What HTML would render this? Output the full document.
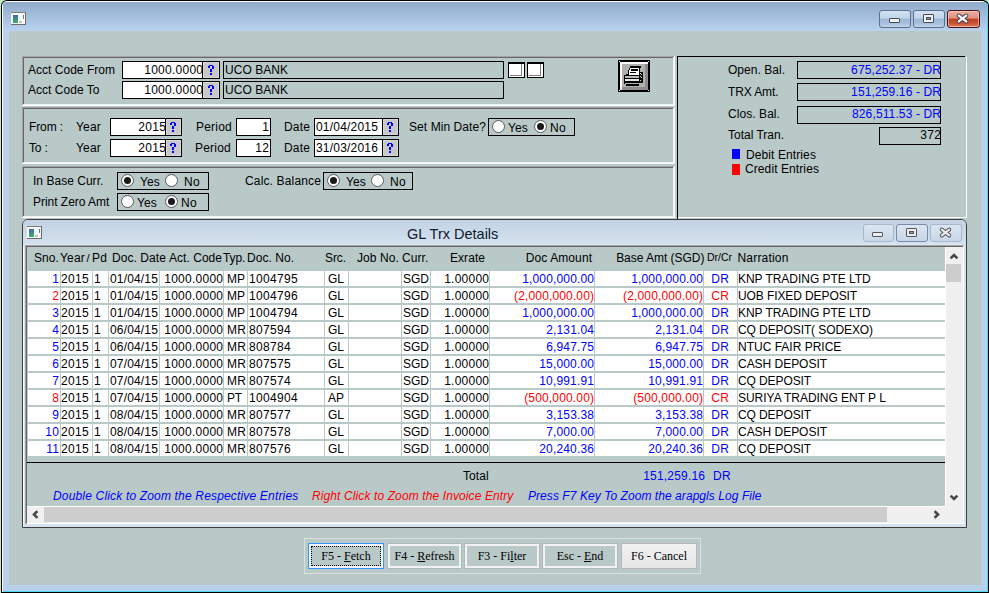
<!DOCTYPE html>
<html><head><meta charset="utf-8"><style>
html,body{margin:0;padding:0;width:989px;height:593px;overflow:hidden;background:#c6e8c6}
.a{position:absolute}
.t{position:absolute;font-family:"Liberation Sans",sans-serif;font-size:12px;line-height:15px;white-space:nowrap;color:#000}
.s{font-family:"Liberation Serif",serif;font-size:12px}
.q{color:#0000ff;font-weight:bold;text-align:center;font-size:13px;line-height:16px}
</style></head><body>
<div class="a" style="left:0;top:0;width:989px;height:593px;background:#c6e8c6"></div>
<div class="a" style="left:1px;top:0;width:988px;height:593px;background:#000;border-radius:6px 6px 0 0"></div>
<div class="a" style="left:2px;top:1px;width:985px;height:591px;background:#fff;border-radius:5px 5px 0 0"></div>
<div class="a" style="left:3px;top:2px;width:985px;height:590px;background:#4cd8f8;border-radius:4px 4px 0 0"></div>
<div class="a" style="left:3px;top:2px;width:984px;height:589px;background:linear-gradient(#8faacb 0px,#b9d2ee 29px,#b8d0ea 30px);border-radius:4px 4px 0 0"></div>
<div class="a" style="left:9px;top:31px;width:972px;height:554px;background:#b8c9c8"></div>
<svg class="a" style="left:11px;top:12px" width="15" height="13" viewBox="0 0 15 13" shape-rendering="crispEdges">
<defs><linearGradient id="ig11" x1="0" y1="0" x2="0" y2="1"><stop offset="0" stop-color="#3a66b8"/><stop offset="1" stop-color="#3cb858"/></linearGradient></defs>
<rect x="0" y="0" width="15" height="13" fill="#fafafa"/>
<rect x="0" y="0" width="15" height="1" fill="#7c7c7c"/><rect x="14" y="0" width="1" height="13" fill="#6c6c6c"/><rect x="0" y="12" width="15" height="1" fill="#6c6c6c"/>
<rect x="2" y="3" width="5" height="8" fill="url(#ig11)"/>
<rect x="8" y="9" width="3" height="2" fill="#c4c4c4"/>
<rect x="12" y="3" width="1" height="4" fill="url(#ig11)"/>
</svg>
<div class="a" style="left:879px;top:10px;width:32px;height:18px;box-sizing:border-box;border:1px solid #5d6f8c;border-radius:3px;background:linear-gradient(#d4e2f2 0,#c0d4ea 45%,#9fb8d6 50%,#a8c0dc 80%,#c2d6ee 100%)"></div>
<div class="a" style="left:889px;top:18px;width:11px;height:5px;box-sizing:border-box;border:1px solid #444c5c;border-radius:1px;background:#f4f4f4"></div>
<div class="a" style="left:913px;top:10px;width:32px;height:18px;box-sizing:border-box;border:1px solid #5d6f8c;border-radius:3px;background:linear-gradient(#d4e2f2 0,#c0d4ea 45%,#9fb8d6 50%,#a8c0dc 80%,#c2d6ee 100%)"></div>
<div class="a" style="left:923px;top:14px;width:11px;height:9px;box-sizing:border-box;border:1px solid #444c5c;border-radius:1px;background:#f4f4f4"></div>
<div class="a" style="left:926px;top:17px;width:5px;height:3px;box-sizing:border-box;border:1px solid #444c5c;background:#8aa0c0"></div>
<div class="a" style="left:947px;top:10px;width:33px;height:18px;box-sizing:border-box;border:1px solid #4a1018;border-radius:3px;box-shadow:inset 0 0 0 1px rgba(255,220,210,0.55);background:linear-gradient(#eab0a0 0,#de9080 45%,#c0401f 50%,#c85535 80%,#dd8868 100%)"></div>
<svg class="a" style="left:957px;top:14px;overflow:visible" width="11" height="9" viewBox="0 0 11 9"><path d="M1.8 1.6 L9.2 7.4 M9.2 1.6 L1.8 7.4" stroke="#3a3a4a" stroke-width="4.2" stroke-linecap="round"/><path d="M1.8 1.6 L9.2 7.4 M9.2 1.6 L1.8 7.4" stroke="#f6f6f6" stroke-width="2.4" stroke-linecap="round"/></svg>
<div class="a" style="left:22px;top:56px;width:652px;height:1px;background:#a4a4a4"></div>
<div class="a" style="left:22px;top:56px;width:1px;height:49px;background:#a4a4a4"></div>
<div class="a" style="left:23px;top:57px;width:650px;height:1px;background:#666666"></div>
<div class="a" style="left:23px;top:57px;width:1px;height:47px;background:#666666"></div>
<div class="a" style="left:23px;top:104px;width:651px;height:1px;background:#eef2f2"></div>
<div class="a" style="left:673px;top:57px;width:1px;height:48px;background:#eef2f2"></div>
<div class="a" style="left:22px;top:105px;width:653px;height:1px;background:#ffffff"></div>
<div class="a" style="left:674px;top:56px;width:1px;height:50px;background:#ffffff"></div>
<div class="a" style="left:22px;top:107px;width:652px;height:1px;background:#a4a4a4"></div>
<div class="a" style="left:22px;top:107px;width:1px;height:56px;background:#a4a4a4"></div>
<div class="a" style="left:23px;top:108px;width:650px;height:1px;background:#666666"></div>
<div class="a" style="left:23px;top:108px;width:1px;height:54px;background:#666666"></div>
<div class="a" style="left:23px;top:162px;width:651px;height:1px;background:#eef2f2"></div>
<div class="a" style="left:673px;top:108px;width:1px;height:55px;background:#eef2f2"></div>
<div class="a" style="left:22px;top:163px;width:653px;height:1px;background:#ffffff"></div>
<div class="a" style="left:674px;top:107px;width:1px;height:57px;background:#ffffff"></div>
<div class="a" style="left:22px;top:166px;width:652px;height:1px;background:#a4a4a4"></div>
<div class="a" style="left:22px;top:166px;width:1px;height:51px;background:#a4a4a4"></div>
<div class="a" style="left:23px;top:167px;width:650px;height:1px;background:#666666"></div>
<div class="a" style="left:23px;top:167px;width:1px;height:49px;background:#666666"></div>
<div class="a" style="left:23px;top:216px;width:651px;height:1px;background:#eef2f2"></div>
<div class="a" style="left:673px;top:167px;width:1px;height:50px;background:#eef2f2"></div>
<div class="a" style="left:22px;top:217px;width:653px;height:1px;background:#ffffff"></div>
<div class="a" style="left:674px;top:166px;width:1px;height:52px;background:#ffffff"></div>
<div class="a" style="left:677px;top:56px;width:288px;height:1px;background:#000"></div>
<div class="a" style="left:677px;top:56px;width:1px;height:163px;background:#000"></div>
<div class="a" style="left:966px;top:57px;width:1px;height:161px;background:#fff"></div>
<div class="a" style="left:678px;top:217px;width:289px;height:1px;background:#fff"></div>
<div class="t" style="left:28px;top:63px;letter-spacing:0.022px;">Acct Code From</div>
<div class="t" style="left:28px;top:83px;letter-spacing:0.025px;">Acct Code To</div>
<div class="a" style="left:122px;top:61px;width:98px;height:18px;box-sizing:border-box;border:1px solid #000;background:#fff"></div>
<div class="a" style="left:202px;top:61px;width:1px;height:18px;background:#000"></div>
<div class="a" style="left:203px;top:62px;width:16px;height:16px;background:#c8c8c8;box-shadow:inset 0 0 0 1px #d8d8d8"></div>
<svg class="a" style="left:208px;top:65px" width="6" height="10" viewBox="0 0 6 10" shape-rendering="crispEdges" fill="#0000ff"><rect x="1" y="0" width="4" height="1"/><rect x="0" y="1" width="2" height="2"/><rect x="4" y="1" width="2" height="3"/><rect x="2" y="4" width="2" height="3"/><rect x="2" y="8" width="2" height="2"/></svg>
<div class="a" style="left:122px;top:81px;width:98px;height:18px;box-sizing:border-box;border:1px solid #000;background:#fff"></div>
<div class="a" style="left:202px;top:81px;width:1px;height:18px;background:#000"></div>
<div class="a" style="left:203px;top:82px;width:16px;height:16px;background:#c8c8c8;box-shadow:inset 0 0 0 1px #d8d8d8"></div>
<svg class="a" style="left:208px;top:85px" width="6" height="10" viewBox="0 0 6 10" shape-rendering="crispEdges" fill="#0000ff"><rect x="1" y="0" width="4" height="1"/><rect x="0" y="1" width="2" height="2"/><rect x="4" y="1" width="2" height="3"/><rect x="2" y="4" width="2" height="3"/><rect x="2" y="8" width="2" height="2"/></svg>
<div class="t" style="left:3.253px;width:200px;text-align:right;top:63px;letter-spacing:0.253px;">1000.0000</div>
<div class="t" style="left:3.253px;width:200px;text-align:right;top:83px;letter-spacing:0.253px;">1000.0000</div>
<div class="a" style="left:223px;top:61px;width:281px;height:18px;box-sizing:border-box;border:1px solid #000;background:#b8c9c8"></div>
<div class="a" style="left:223px;top:81px;width:281px;height:18px;box-sizing:border-box;border:1px solid #000;background:#b8c9c8"></div>
<div class="t" style="left:225px;top:63px;letter-spacing:0.04px;">UCO BANK</div>
<div class="t" style="left:225px;top:83px;letter-spacing:0.04px;">UCO BANK</div>
<div class="a" style="left:508px;top:62px;width:17px;height:16px;box-sizing:border-box;border:1px solid #000;border-top-width:2px;background:#fff"></div>
<div class="a" style="left:521px;top:64px;width:1px;height:12px;background:#808080"></div>
<div class="a" style="left:510px;top:75px;width:12px;height:1px;background:#808080"></div>
<div class="a" style="left:527px;top:62px;width:17px;height:16px;box-sizing:border-box;border:1px solid #000;border-top-width:2px;background:#fff"></div>
<div class="a" style="left:540px;top:64px;width:1px;height:12px;background:#808080"></div>
<div class="a" style="left:529px;top:75px;width:12px;height:1px;background:#808080"></div>
<div class="a" style="left:618px;top:60px;width:32px;height:32px;box-sizing:border-box;border:2px solid #000;background:#b0b0b0;box-shadow:inset 2px 2px 0 #f8f8f8,inset -3px -3px 0 #8c8c8c"></div>
<svg class="a" style="left:617px;top:59px" width="34" height="34" viewBox="0 0 34 34" shape-rendering="crispEdges">
<rect x="2" y="2" width="1" height="1" fill="#fff"/><rect x="31" y="2" width="1" height="1" fill="#fff"/><rect x="2" y="31" width="1" height="1" fill="#fff"/><rect x="31" y="31" width="1" height="1" fill="#fff"/>
<rect x="13" y="7" width="11" height="2" fill="#000"/>
<rect x="12" y="9" width="10" height="7" fill="#fff"/>
<rect x="12" y="9" width="1" height="2" fill="#000"/><rect x="11" y="11" width="1" height="4" fill="#000"/>
<rect x="14" y="10" width="7" height="2" fill="#000"/><rect x="13" y="13" width="6" height="1" fill="#000"/>
<rect x="22" y="9" width="1" height="5" fill="#000"/>
<rect x="9" y="15" width="3" height="1" fill="#000"/>
<rect x="7" y="16" width="17" height="1" fill="#000"/>
<rect x="8" y="17" width="15" height="2" fill="#b8b8b8"/>
<rect x="7" y="17" width="1" height="8" fill="#000"/>
<rect x="8" y="19" width="15" height="1" fill="#000"/>
<rect x="8" y="20" width="15" height="2" fill="#e4e4e4"/>
<rect x="8" y="22" width="15" height="2" fill="#000"/>
<rect x="8" y="24" width="15" height="1" fill="#b0b0b0"/>
<rect x="9" y="25" width="13" height="2" fill="#000"/>
<rect x="22" y="13" width="4" height="11" fill="#000"/>
<rect x="23" y="14" width="1" height="1" fill="#ddd"/><rect x="24" y="15" width="1" height="1" fill="#ddd"/><rect x="23" y="17" width="1" height="1" fill="#ddd"/><rect x="24" y="18" width="1" height="1" fill="#ddd"/><rect x="23" y="21" width="1" height="1" fill="#ddd"/>
</svg>
<div class="t" style="left:29px;top:120px;letter-spacing:-0.111px;">From :</div>
<div class="t" style="left:76px;top:120px;letter-spacing:0.163px;">Year</div>
<div class="a" style="left:110px;top:118px;width:72px;height:18px;box-sizing:border-box;border:1px solid #000;background:#fff"></div>
<div class="a" style="left:165px;top:118px;width:1px;height:18px;background:#000"></div>
<div class="a" style="left:166px;top:119px;width:15px;height:16px;background:#c8c8c8;box-shadow:inset 0 0 0 1px #d8d8d8"></div>
<svg class="a" style="left:170px;top:122px" width="6" height="10" viewBox="0 0 6 10" shape-rendering="crispEdges" fill="#0000ff"><rect x="1" y="0" width="4" height="1"/><rect x="0" y="1" width="2" height="2"/><rect x="4" y="1" width="2" height="3"/><rect x="2" y="4" width="2" height="3"/><rect x="2" y="8" width="2" height="2"/></svg>
<div class="t" style="left:-33.674px;width:200px;text-align:right;top:120px;letter-spacing:0.326px;">2015</div>
<div class="t" style="left:196px;top:120px;letter-spacing:0.219px;">Period</div>
<div class="a" style="left:236px;top:118px;width:35px;height:18px;box-sizing:border-box;border:1px solid #000;background:#fff"></div>
<div class="t" style="left:69.326px;width:200px;text-align:right;top:120px;letter-spacing:0.326px;">1</div>
<div class="t" style="left:284px;top:120px;letter-spacing:0.163px;">Date</div>
<div class="a" style="left:314px;top:118px;width:85px;height:18px;box-sizing:border-box;border:1px solid #000;background:#fff"></div>
<div class="a" style="left:382px;top:118px;width:1px;height:18px;background:#000"></div>
<div class="a" style="left:383px;top:119px;width:15px;height:16px;background:#c8c8c8;box-shadow:inset 0 0 0 1px #d8d8d8"></div>
<svg class="a" style="left:387px;top:122px" width="6" height="10" viewBox="0 0 6 10" shape-rendering="crispEdges" fill="#0000ff"><rect x="1" y="0" width="4" height="1"/><rect x="0" y="1" width="2" height="2"/><rect x="4" y="1" width="2" height="3"/><rect x="2" y="4" width="2" height="3"/><rect x="2" y="8" width="2" height="2"/></svg>
<div class="t" style="left:316px;top:120px;letter-spacing:0.194px;">01/04/2015</div>
<div class="t" style="left:29px;top:141px;letter-spacing:-0.168px;">To :</div>
<div class="t" style="left:76px;top:141px;letter-spacing:0.163px;">Year</div>
<div class="a" style="left:110px;top:139px;width:72px;height:18px;box-sizing:border-box;border:1px solid #000;background:#fff"></div>
<div class="a" style="left:165px;top:139px;width:1px;height:18px;background:#000"></div>
<div class="a" style="left:166px;top:140px;width:15px;height:16px;background:#c8c8c8;box-shadow:inset 0 0 0 1px #d8d8d8"></div>
<svg class="a" style="left:170px;top:143px" width="6" height="10" viewBox="0 0 6 10" shape-rendering="crispEdges" fill="#0000ff"><rect x="1" y="0" width="4" height="1"/><rect x="0" y="1" width="2" height="2"/><rect x="4" y="1" width="2" height="3"/><rect x="2" y="4" width="2" height="3"/><rect x="2" y="8" width="2" height="2"/></svg>
<div class="t" style="left:-33.674px;width:200px;text-align:right;top:141px;letter-spacing:0.326px;">2015</div>
<div class="t" style="left:195px;top:141px;letter-spacing:0.219px;">Period</div>
<div class="a" style="left:236px;top:139px;width:35px;height:18px;box-sizing:border-box;border:1px solid #000;background:#fff"></div>
<div class="t" style="left:69.326px;width:200px;text-align:right;top:141px;letter-spacing:0.326px;">12</div>
<div class="t" style="left:284px;top:141px;letter-spacing:0.163px;">Date</div>
<div class="a" style="left:314px;top:139px;width:85px;height:18px;box-sizing:border-box;border:1px solid #000;background:#fff"></div>
<div class="a" style="left:382px;top:139px;width:1px;height:18px;background:#000"></div>
<div class="a" style="left:383px;top:140px;width:15px;height:16px;background:#c8c8c8;box-shadow:inset 0 0 0 1px #d8d8d8"></div>
<svg class="a" style="left:387px;top:143px" width="6" height="10" viewBox="0 0 6 10" shape-rendering="crispEdges" fill="#0000ff"><rect x="1" y="0" width="4" height="1"/><rect x="0" y="1" width="2" height="2"/><rect x="4" y="1" width="2" height="3"/><rect x="2" y="4" width="2" height="3"/><rect x="2" y="8" width="2" height="2"/></svg>
<div class="t" style="left:316px;top:141px;letter-spacing:0.194px;">31/03/2016</div>
<div class="t" style="left:409px;top:120px;letter-spacing:0.074px;">Set Min Date?</div>
<div class="a" style="left:488px;top:118px;width:87px;height:18px;box-sizing:border-box;border:1px solid #000"></div>
<div class="a" style="left:492px;top:120px;width:13px;height:13px;box-sizing:border-box;border:1px solid #5a5a5a;border-radius:50%;background:#fff"></div>
<div class="t" style="left:508px;top:121px;letter-spacing:0.107px;">Yes</div>
<div class="a" style="left:534px;top:120px;width:13px;height:13px;box-sizing:border-box;border:1px solid #5a5a5a;border-radius:50%;background:#fff"></div>
<div class="a" style="left:537px;top:123px;width:7px;height:7px;border-radius:50%;background:#1a1a1a"></div>
<div class="t" style="left:550px;top:121px;letter-spacing:0.33px;">No</div>
<div class="t" style="left:33px;top:174px;letter-spacing:0.024px;">In Base Curr.</div>
<div class="t" style="left:33px;top:195px;letter-spacing:-0.025px;">Print Zero Amt</div>
<div class="a" style="left:117px;top:172px;width:92px;height:18px;box-sizing:border-box;border:1px solid #000"></div>
<div class="a" style="left:121px;top:174px;width:13px;height:13px;box-sizing:border-box;border:1px solid #5a5a5a;border-radius:50%;background:#fff"></div>
<div class="a" style="left:124px;top:177px;width:7px;height:7px;border-radius:50%;background:#1a1a1a"></div>
<div class="t" style="left:140px;top:175px;letter-spacing:0.107px;">Yes</div>
<div class="a" style="left:165px;top:174px;width:13px;height:13px;box-sizing:border-box;border:1px solid #5a5a5a;border-radius:50%;background:#fff"></div>
<div class="t" style="left:184px;top:175px;letter-spacing:0.33px;">No</div>
<div class="a" style="left:117px;top:193px;width:92px;height:18px;box-sizing:border-box;border:1px solid #000"></div>
<div class="a" style="left:121px;top:195px;width:13px;height:13px;box-sizing:border-box;border:1px solid #5a5a5a;border-radius:50%;background:#fff"></div>
<div class="t" style="left:137px;top:196px;letter-spacing:0.107px;">Yes</div>
<div class="a" style="left:165px;top:195px;width:13px;height:13px;box-sizing:border-box;border:1px solid #5a5a5a;border-radius:50%;background:#fff"></div>
<div class="a" style="left:168px;top:198px;width:7px;height:7px;border-radius:50%;background:#1a1a1a"></div>
<div class="t" style="left:181px;top:196px;letter-spacing:0.33px;">No</div>
<div class="t" style="left:245px;top:174px;letter-spacing:0.151px;">Calc. Balance</div>
<div class="a" style="left:323px;top:172px;width:90px;height:18px;box-sizing:border-box;border:1px solid #000"></div>
<div class="a" style="left:327px;top:174px;width:13px;height:13px;box-sizing:border-box;border:1px solid #5a5a5a;border-radius:50%;background:#fff"></div>
<div class="a" style="left:330px;top:177px;width:7px;height:7px;border-radius:50%;background:#1a1a1a"></div>
<div class="t" style="left:346px;top:175px;letter-spacing:0.107px;">Yes</div>
<div class="a" style="left:371px;top:174px;width:13px;height:13px;box-sizing:border-box;border:1px solid #5a5a5a;border-radius:50%;background:#fff"></div>
<div class="t" style="left:390px;top:175px;letter-spacing:0.33px;">No</div>
<div class="t" style="left:728px;top:63px;letter-spacing:0.03px;">Open. Bal.</div>
<div class="a" style="left:797px;top:61px;width:144px;height:18px;box-sizing:border-box;border:1px solid #000"></div>
<div class="t" style="left:741.130px;width:200px;text-align:right;top:63px;letter-spacing:0.13px;color:#0000ff;">675,252.37 - DR</div>
<div class="t" style="left:728px;top:85px;letter-spacing:-0.125px;">TRX Amt.</div>
<div class="a" style="left:797px;top:83px;width:144px;height:18px;box-sizing:border-box;border:1px solid #000"></div>
<div class="t" style="left:741.130px;width:200px;text-align:right;top:85px;letter-spacing:0.13px;color:#0000ff;">151,259.16 - DR</div>
<div class="t" style="left:728px;top:107px;letter-spacing:0.065px;">Clos. Bal.</div>
<div class="a" style="left:797px;top:106px;width:144px;height:18px;box-sizing:border-box;border:1px solid #000"></div>
<div class="t" style="left:741.130px;width:200px;text-align:right;top:107px;letter-spacing:0.13px;color:#0000ff;">826,511.53 - DR</div>
<div class="t" style="left:728px;top:128px;letter-spacing:-0.002px;">Total Tran.</div>
<div class="a" style="left:879px;top:127px;width:62px;height:18px;box-sizing:border-box;border:1px solid #000"></div>
<div class="t" style="left:741.326px;width:200px;text-align:right;top:128px;letter-spacing:0.326px;">372</div>
<div class="a" style="left:732px;top:149px;width:8px;height:10px;background:#0000ff"></div>
<div class="t" style="left:746px;top:148px;letter-spacing:0.1px;">Debit Entries</div>
<div class="a" style="left:732px;top:164px;width:8px;height:11px;background:#ff0000"></div>
<div class="t" style="left:745px;top:162px;letter-spacing:0.093px;">Credit Entries</div>
<div class="a" style="left:22px;top:219px;width:945px;height:309px;box-sizing:border-box;border:1px solid #3c3c3c;border-radius:6px 6px 0 0;background:#d6e2ee"></div>
<div class="a" style="left:23px;top:220px;width:943px;height:26px;border-radius:5px 5px 0 0;background:linear-gradient(#c2d2e2,#d6e3f0)"></div>
<svg class="a" style="left:27px;top:226px" width="15" height="13" viewBox="0 0 15 13" shape-rendering="crispEdges">
<defs><linearGradient id="ig27" x1="0" y1="0" x2="0" y2="1"><stop offset="0" stop-color="#3a66b8"/><stop offset="1" stop-color="#3cb858"/></linearGradient></defs>
<rect x="0" y="0" width="15" height="13" fill="#fafafa"/>
<rect x="0" y="0" width="15" height="1" fill="#7c7c7c"/><rect x="14" y="0" width="1" height="13" fill="#6c6c6c"/><rect x="0" y="12" width="15" height="1" fill="#6c6c6c"/>
<rect x="2" y="3" width="5" height="8" fill="url(#ig27)"/>
<rect x="8" y="9" width="3" height="2" fill="#c4c4c4"/>
<rect x="12" y="3" width="1" height="4" fill="url(#ig27)"/>
</svg>
<div class="t" style="left:407px;top:225px;font-size:14.5px;line-height:18px;color:#101830">GL Trx Details</div>
<div class="a" style="left:863px;top:224px;width:31px;height:18px;box-sizing:border-box;border:1px solid #a8b8cc;border-radius:3px;background:linear-gradient(#dce6f2,#c8d6e6)"></div>
<div class="a" style="left:872px;top:232px;width:11px;height:5px;box-sizing:border-box;border:1px solid #505560;border-radius:1px;background:#ececec"></div>
<div class="a" style="left:896px;top:224px;width:32px;height:18px;box-sizing:border-box;border:1px solid #7a88a8;border-radius:3px;background:linear-gradient(#dce6f2,#c8d6e6)"></div>
<div class="a" style="left:906px;top:228px;width:11px;height:9px;box-sizing:border-box;border:1px solid #505560;border-radius:1px;background:#ececec"></div>
<div class="a" style="left:909px;top:231px;width:5px;height:3px;box-sizing:border-box;border:1px solid #505560;background:#8aa0c0"></div>
<div class="a" style="left:930px;top:224px;width:32px;height:18px;box-sizing:border-box;border:1px solid #a8b8cc;border-radius:3px;background:linear-gradient(#dce6f2,#c8d6e6)"></div>
<svg class="a" style="left:940px;top:228px;overflow:visible" width="11" height="9" viewBox="0 0 11 9"><path d="M1.8 1.6 L9.2 7.4 M9.2 1.6 L1.8 7.4" stroke="#444c58" stroke-width="4" stroke-linecap="round"/><path d="M1.8 1.6 L9.2 7.4 M9.2 1.6 L1.8 7.4" stroke="#ececec" stroke-width="2.3" stroke-linecap="round"/></svg>
<div class="a" style="left:26px;top:246px;width:937px;height:278px;background:#b8c9c8"></div>
<div class="a" style="left:25px;top:245px;width:938px;height:1px;background:#a4a4a4"></div>
<div class="a" style="left:25px;top:245px;width:1px;height:279px;background:#a4a4a4"></div>
<div class="a" style="left:26px;top:246px;width:937px;height:1px;background:#666666"></div>
<div class="a" style="left:26px;top:246px;width:1px;height:277px;background:#666666"></div>
<div class="a" style="left:25px;top:244px;width:938px;height:1px;background:#dde8f4"></div>
<div class="a" style="left:27px;top:523px;width:936px;height:1px;background:#fff"></div>
<div class="t" style="left:34px;top:251px;letter-spacing:0.079px;">Sno.</div>
<div class="t" style="left:60px;top:251px;letter-spacing:0.163px;">Year</div>
<div class="t" style="left:86.5px;top:251px;font-size:11px;">/</div>
<div class="t" style="left:92px;top:251px;letter-spacing:0.161px;">Pd</div>
<div class="t" style="left:112px;top:251px;letter-spacing:0.072px;">Doc. Date</div>
<div class="t" style="left:22.034px;width:200px;text-align:right;top:251px;letter-spacing:0.034px;">Act. Code</div>
<div class="t" style="left:223px;top:251px;letter-spacing:-0.084px;">Typ.</div>
<div class="t" style="left:247px;top:251px;letter-spacing:0.04px;">Doc. No.</div>
<div class="t" style="left:325px;top:251px;letter-spacing:-0.083px;">Src.</div>
<div class="t" style="left:357px;top:251px;letter-spacing:0.092px;">Job No.</div>
<div class="t" style="left:402px;top:251px;letter-spacing:0.067px;">Curr.</div>
<div class="t" style="left:450px;top:251px;letter-spacing:0.053px;">Exrate</div>
<div class="t" style="left:392.097px;width:200px;text-align:right;top:251px;letter-spacing:0.097px;">Doc Amount</div>
<div class="t" style="left:504.475px;width:200px;text-align:right;top:251px;letter-spacing:-0.025px;">Base Amt (SGD)</div>
<div class="t" style="left:707px;top:250px;font-size:10.5px;">Dr/Cr</div>
<div class="t" style="left:737.5px;top:251px;letter-spacing:0.183px;">Narration</div>
<div class="a" style="left:28px;top:271px;width:917px;height:15px;background:#fff"></div>
<div class="a" style="left:60px;top:271px;width:1px;height:15px;background:#b8c9c8"></div>
<div class="a" style="left:92px;top:271px;width:1px;height:15px;background:#b8c9c8"></div>
<div class="a" style="left:108px;top:271px;width:1px;height:15px;background:#b8c9c8"></div>
<div class="a" style="left:159px;top:271px;width:1px;height:15px;background:#b8c9c8"></div>
<div class="a" style="left:223px;top:271px;width:1px;height:15px;background:#b8c9c8"></div>
<div class="a" style="left:247px;top:271px;width:1px;height:15px;background:#b8c9c8"></div>
<div class="a" style="left:324px;top:271px;width:1px;height:15px;background:#b8c9c8"></div>
<div class="a" style="left:348px;top:271px;width:1px;height:15px;background:#b8c9c8"></div>
<div class="a" style="left:401px;top:271px;width:1px;height:15px;background:#b8c9c8"></div>
<div class="a" style="left:430px;top:271px;width:1px;height:15px;background:#b8c9c8"></div>
<div class="a" style="left:489px;top:271px;width:1px;height:15px;background:#b8c9c8"></div>
<div class="a" style="left:594px;top:271px;width:1px;height:15px;background:#b8c9c8"></div>
<div class="a" style="left:703px;top:271px;width:1px;height:15px;background:#b8c9c8"></div>
<div class="a" style="left:737px;top:271px;width:1px;height:15px;background:#b8c9c8"></div>
<div class="t" style="left:-140.674px;width:200px;text-align:right;top:272px;letter-spacing:0.326px;color:#0000ff;">1</div>
<div class="t" style="left:61px;top:272px;letter-spacing:0.326px;">2015</div>
<div class="t" style="left:94px;top:272px;letter-spacing:0.326px;">1</div>
<div class="t" style="left:110px;top:272px;letter-spacing:0.161px;">01/04/15</div>
<div class="t" style="left:23.253px;width:200px;text-align:right;top:272px;letter-spacing:0.253px;">1000.0000</div>
<div class="t" style="left:227px;top:272px;">MP</div>
<div class="t" style="left:249px;top:272px;letter-spacing:0.326px;">1004795</div>
<div class="t" style="left:285.998px;width:100px;text-align:center;top:272px;letter-spacing:-0.004px;">GL</div>
<div class="t" style="left:403px;top:272px;letter-spacing:-0.001px;">SGD</div>
<div class="t" style="left:289.232px;width:200px;text-align:right;top:272px;letter-spacing:0.232px;">1.00000</div>
<div class="t" style="left:394.161px;width:200px;text-align:right;top:272px;letter-spacing:0.161px;color:#0000ff;">1,000,000.00</div>
<div class="t" style="left:503.161px;width:200px;text-align:right;top:272px;letter-spacing:0.161px;color:#0000ff;">1,000,000.00</div>
<div class="t" style="left:670.167px;width:100px;text-align:center;top:272px;letter-spacing:0.334px;color:#0000ff;">DR</div>
<div class="t" style="left:738px;top:272px;letter-spacing:-0.036px;">KNP TRADING PTE LTD</div>
<div class="a" style="left:28px;top:288px;width:917px;height:15px;background:#fff"></div>
<div class="a" style="left:60px;top:288px;width:1px;height:15px;background:#b8c9c8"></div>
<div class="a" style="left:92px;top:288px;width:1px;height:15px;background:#b8c9c8"></div>
<div class="a" style="left:108px;top:288px;width:1px;height:15px;background:#b8c9c8"></div>
<div class="a" style="left:159px;top:288px;width:1px;height:15px;background:#b8c9c8"></div>
<div class="a" style="left:223px;top:288px;width:1px;height:15px;background:#b8c9c8"></div>
<div class="a" style="left:247px;top:288px;width:1px;height:15px;background:#b8c9c8"></div>
<div class="a" style="left:324px;top:288px;width:1px;height:15px;background:#b8c9c8"></div>
<div class="a" style="left:348px;top:288px;width:1px;height:15px;background:#b8c9c8"></div>
<div class="a" style="left:401px;top:288px;width:1px;height:15px;background:#b8c9c8"></div>
<div class="a" style="left:430px;top:288px;width:1px;height:15px;background:#b8c9c8"></div>
<div class="a" style="left:489px;top:288px;width:1px;height:15px;background:#b8c9c8"></div>
<div class="a" style="left:594px;top:288px;width:1px;height:15px;background:#b8c9c8"></div>
<div class="a" style="left:703px;top:288px;width:1px;height:15px;background:#b8c9c8"></div>
<div class="a" style="left:737px;top:288px;width:1px;height:15px;background:#b8c9c8"></div>
<div class="t" style="left:-140.674px;width:200px;text-align:right;top:289px;letter-spacing:0.326px;color:#ff0000;">2</div>
<div class="t" style="left:61px;top:289px;letter-spacing:0.326px;">2015</div>
<div class="t" style="left:94px;top:289px;letter-spacing:0.326px;">1</div>
<div class="t" style="left:110px;top:289px;letter-spacing:0.161px;">01/04/15</div>
<div class="t" style="left:23.253px;width:200px;text-align:right;top:289px;letter-spacing:0.253px;">1000.0000</div>
<div class="t" style="left:227px;top:289px;">MP</div>
<div class="t" style="left:249px;top:289px;letter-spacing:0.326px;">1004796</div>
<div class="t" style="left:285.998px;width:100px;text-align:center;top:289px;letter-spacing:-0.004px;">GL</div>
<div class="t" style="left:403px;top:289px;letter-spacing:-0.001px;">SGD</div>
<div class="t" style="left:289.232px;width:200px;text-align:right;top:289px;letter-spacing:0.232px;">1.00000</div>
<div class="t" style="left:394.139px;width:200px;text-align:right;top:289px;letter-spacing:0.139px;color:#ff0000;">(2,000,000.00)</div>
<div class="t" style="left:503.139px;width:200px;text-align:right;top:289px;letter-spacing:0.139px;color:#ff0000;">(2,000,000.00)</div>
<div class="t" style="left:670.167px;width:100px;text-align:center;top:289px;letter-spacing:0.334px;color:#ff0000;">CR</div>
<div class="t" style="left:738px;top:289px;letter-spacing:-0.099px;">UOB FIXED DEPOSIT</div>
<div class="a" style="left:28px;top:305px;width:917px;height:15px;background:#fff"></div>
<div class="a" style="left:60px;top:305px;width:1px;height:15px;background:#b8c9c8"></div>
<div class="a" style="left:92px;top:305px;width:1px;height:15px;background:#b8c9c8"></div>
<div class="a" style="left:108px;top:305px;width:1px;height:15px;background:#b8c9c8"></div>
<div class="a" style="left:159px;top:305px;width:1px;height:15px;background:#b8c9c8"></div>
<div class="a" style="left:223px;top:305px;width:1px;height:15px;background:#b8c9c8"></div>
<div class="a" style="left:247px;top:305px;width:1px;height:15px;background:#b8c9c8"></div>
<div class="a" style="left:324px;top:305px;width:1px;height:15px;background:#b8c9c8"></div>
<div class="a" style="left:348px;top:305px;width:1px;height:15px;background:#b8c9c8"></div>
<div class="a" style="left:401px;top:305px;width:1px;height:15px;background:#b8c9c8"></div>
<div class="a" style="left:430px;top:305px;width:1px;height:15px;background:#b8c9c8"></div>
<div class="a" style="left:489px;top:305px;width:1px;height:15px;background:#b8c9c8"></div>
<div class="a" style="left:594px;top:305px;width:1px;height:15px;background:#b8c9c8"></div>
<div class="a" style="left:703px;top:305px;width:1px;height:15px;background:#b8c9c8"></div>
<div class="a" style="left:737px;top:305px;width:1px;height:15px;background:#b8c9c8"></div>
<div class="t" style="left:-140.674px;width:200px;text-align:right;top:306px;letter-spacing:0.326px;color:#0000ff;">3</div>
<div class="t" style="left:61px;top:306px;letter-spacing:0.326px;">2015</div>
<div class="t" style="left:94px;top:306px;letter-spacing:0.326px;">1</div>
<div class="t" style="left:110px;top:306px;letter-spacing:0.161px;">01/04/15</div>
<div class="t" style="left:23.253px;width:200px;text-align:right;top:306px;letter-spacing:0.253px;">1000.0000</div>
<div class="t" style="left:227px;top:306px;">MP</div>
<div class="t" style="left:249px;top:306px;letter-spacing:0.326px;">1004794</div>
<div class="t" style="left:285.998px;width:100px;text-align:center;top:306px;letter-spacing:-0.004px;">GL</div>
<div class="t" style="left:403px;top:306px;letter-spacing:-0.001px;">SGD</div>
<div class="t" style="left:289.232px;width:200px;text-align:right;top:306px;letter-spacing:0.232px;">1.00000</div>
<div class="t" style="left:394.161px;width:200px;text-align:right;top:306px;letter-spacing:0.161px;color:#0000ff;">1,000,000.00</div>
<div class="t" style="left:503.161px;width:200px;text-align:right;top:306px;letter-spacing:0.161px;color:#0000ff;">1,000,000.00</div>
<div class="t" style="left:670.167px;width:100px;text-align:center;top:306px;letter-spacing:0.334px;color:#0000ff;">DR</div>
<div class="t" style="left:738px;top:306px;letter-spacing:-0.036px;">KNP TRADING PTE LTD</div>
<div class="a" style="left:28px;top:322px;width:917px;height:15px;background:#fff"></div>
<div class="a" style="left:60px;top:322px;width:1px;height:15px;background:#b8c9c8"></div>
<div class="a" style="left:92px;top:322px;width:1px;height:15px;background:#b8c9c8"></div>
<div class="a" style="left:108px;top:322px;width:1px;height:15px;background:#b8c9c8"></div>
<div class="a" style="left:159px;top:322px;width:1px;height:15px;background:#b8c9c8"></div>
<div class="a" style="left:223px;top:322px;width:1px;height:15px;background:#b8c9c8"></div>
<div class="a" style="left:247px;top:322px;width:1px;height:15px;background:#b8c9c8"></div>
<div class="a" style="left:324px;top:322px;width:1px;height:15px;background:#b8c9c8"></div>
<div class="a" style="left:348px;top:322px;width:1px;height:15px;background:#b8c9c8"></div>
<div class="a" style="left:401px;top:322px;width:1px;height:15px;background:#b8c9c8"></div>
<div class="a" style="left:430px;top:322px;width:1px;height:15px;background:#b8c9c8"></div>
<div class="a" style="left:489px;top:322px;width:1px;height:15px;background:#b8c9c8"></div>
<div class="a" style="left:594px;top:322px;width:1px;height:15px;background:#b8c9c8"></div>
<div class="a" style="left:703px;top:322px;width:1px;height:15px;background:#b8c9c8"></div>
<div class="a" style="left:737px;top:322px;width:1px;height:15px;background:#b8c9c8"></div>
<div class="t" style="left:-140.674px;width:200px;text-align:right;top:323px;letter-spacing:0.326px;color:#0000ff;">4</div>
<div class="t" style="left:61px;top:323px;letter-spacing:0.326px;">2015</div>
<div class="t" style="left:94px;top:323px;letter-spacing:0.326px;">1</div>
<div class="t" style="left:110px;top:323px;letter-spacing:0.161px;">06/04/15</div>
<div class="t" style="left:23.253px;width:200px;text-align:right;top:323px;letter-spacing:0.253px;">1000.0000</div>
<div class="t" style="left:227px;top:323px;letter-spacing:0.169px;">MR</div>
<div class="t" style="left:249px;top:323px;letter-spacing:0.326px;">807594</div>
<div class="t" style="left:285.998px;width:100px;text-align:center;top:323px;letter-spacing:-0.004px;">GL</div>
<div class="t" style="left:403px;top:323px;letter-spacing:-0.001px;">SGD</div>
<div class="t" style="left:289.232px;width:200px;text-align:right;top:323px;letter-spacing:0.232px;">1.00000</div>
<div class="t" style="left:394.161px;width:200px;text-align:right;top:323px;letter-spacing:0.161px;color:#0000ff;">2,131.04</div>
<div class="t" style="left:503.161px;width:200px;text-align:right;top:323px;letter-spacing:0.161px;color:#0000ff;">2,131.04</div>
<div class="t" style="left:670.167px;width:100px;text-align:center;top:323px;letter-spacing:0.334px;color:#0000ff;">DR</div>
<div class="t" style="left:738px;top:323px;letter-spacing:-0.089px;">CQ DEPOSIT( SODEXO)</div>
<div class="a" style="left:28px;top:339px;width:917px;height:15px;background:#fff"></div>
<div class="a" style="left:60px;top:339px;width:1px;height:15px;background:#b8c9c8"></div>
<div class="a" style="left:92px;top:339px;width:1px;height:15px;background:#b8c9c8"></div>
<div class="a" style="left:108px;top:339px;width:1px;height:15px;background:#b8c9c8"></div>
<div class="a" style="left:159px;top:339px;width:1px;height:15px;background:#b8c9c8"></div>
<div class="a" style="left:223px;top:339px;width:1px;height:15px;background:#b8c9c8"></div>
<div class="a" style="left:247px;top:339px;width:1px;height:15px;background:#b8c9c8"></div>
<div class="a" style="left:324px;top:339px;width:1px;height:15px;background:#b8c9c8"></div>
<div class="a" style="left:348px;top:339px;width:1px;height:15px;background:#b8c9c8"></div>
<div class="a" style="left:401px;top:339px;width:1px;height:15px;background:#b8c9c8"></div>
<div class="a" style="left:430px;top:339px;width:1px;height:15px;background:#b8c9c8"></div>
<div class="a" style="left:489px;top:339px;width:1px;height:15px;background:#b8c9c8"></div>
<div class="a" style="left:594px;top:339px;width:1px;height:15px;background:#b8c9c8"></div>
<div class="a" style="left:703px;top:339px;width:1px;height:15px;background:#b8c9c8"></div>
<div class="a" style="left:737px;top:339px;width:1px;height:15px;background:#b8c9c8"></div>
<div class="t" style="left:-140.674px;width:200px;text-align:right;top:340px;letter-spacing:0.326px;color:#0000ff;">5</div>
<div class="t" style="left:61px;top:340px;letter-spacing:0.326px;">2015</div>
<div class="t" style="left:94px;top:340px;letter-spacing:0.326px;">1</div>
<div class="t" style="left:110px;top:340px;letter-spacing:0.161px;">06/04/15</div>
<div class="t" style="left:23.253px;width:200px;text-align:right;top:340px;letter-spacing:0.253px;">1000.0000</div>
<div class="t" style="left:227px;top:340px;letter-spacing:0.169px;">MR</div>
<div class="t" style="left:249px;top:340px;letter-spacing:0.326px;">808784</div>
<div class="t" style="left:285.998px;width:100px;text-align:center;top:340px;letter-spacing:-0.004px;">GL</div>
<div class="t" style="left:403px;top:340px;letter-spacing:-0.001px;">SGD</div>
<div class="t" style="left:289.232px;width:200px;text-align:right;top:340px;letter-spacing:0.232px;">1.00000</div>
<div class="t" style="left:394.161px;width:200px;text-align:right;top:340px;letter-spacing:0.161px;color:#0000ff;">6,947.75</div>
<div class="t" style="left:503.161px;width:200px;text-align:right;top:340px;letter-spacing:0.161px;color:#0000ff;">6,947.75</div>
<div class="t" style="left:670.167px;width:100px;text-align:center;top:340px;letter-spacing:0.334px;color:#0000ff;">DR</div>
<div class="t" style="left:738px;top:340px;">NTUC FAIR PRICE</div>
<div class="a" style="left:28px;top:356px;width:917px;height:15px;background:#fff"></div>
<div class="a" style="left:60px;top:356px;width:1px;height:15px;background:#b8c9c8"></div>
<div class="a" style="left:92px;top:356px;width:1px;height:15px;background:#b8c9c8"></div>
<div class="a" style="left:108px;top:356px;width:1px;height:15px;background:#b8c9c8"></div>
<div class="a" style="left:159px;top:356px;width:1px;height:15px;background:#b8c9c8"></div>
<div class="a" style="left:223px;top:356px;width:1px;height:15px;background:#b8c9c8"></div>
<div class="a" style="left:247px;top:356px;width:1px;height:15px;background:#b8c9c8"></div>
<div class="a" style="left:324px;top:356px;width:1px;height:15px;background:#b8c9c8"></div>
<div class="a" style="left:348px;top:356px;width:1px;height:15px;background:#b8c9c8"></div>
<div class="a" style="left:401px;top:356px;width:1px;height:15px;background:#b8c9c8"></div>
<div class="a" style="left:430px;top:356px;width:1px;height:15px;background:#b8c9c8"></div>
<div class="a" style="left:489px;top:356px;width:1px;height:15px;background:#b8c9c8"></div>
<div class="a" style="left:594px;top:356px;width:1px;height:15px;background:#b8c9c8"></div>
<div class="a" style="left:703px;top:356px;width:1px;height:15px;background:#b8c9c8"></div>
<div class="a" style="left:737px;top:356px;width:1px;height:15px;background:#b8c9c8"></div>
<div class="t" style="left:-140.674px;width:200px;text-align:right;top:357px;letter-spacing:0.326px;color:#0000ff;">6</div>
<div class="t" style="left:61px;top:357px;letter-spacing:0.326px;">2015</div>
<div class="t" style="left:94px;top:357px;letter-spacing:0.326px;">1</div>
<div class="t" style="left:110px;top:357px;letter-spacing:0.161px;">07/04/15</div>
<div class="t" style="left:23.253px;width:200px;text-align:right;top:357px;letter-spacing:0.253px;">1000.0000</div>
<div class="t" style="left:227px;top:357px;letter-spacing:0.169px;">MR</div>
<div class="t" style="left:249px;top:357px;letter-spacing:0.326px;">807575</div>
<div class="t" style="left:285.998px;width:100px;text-align:center;top:357px;letter-spacing:-0.004px;">GL</div>
<div class="t" style="left:403px;top:357px;letter-spacing:-0.001px;">SGD</div>
<div class="t" style="left:289.232px;width:200px;text-align:right;top:357px;letter-spacing:0.232px;">1.00000</div>
<div class="t" style="left:394.179px;width:200px;text-align:right;top:357px;letter-spacing:0.179px;color:#0000ff;">15,000.00</div>
<div class="t" style="left:503.179px;width:200px;text-align:right;top:357px;letter-spacing:0.179px;color:#0000ff;">15,000.00</div>
<div class="t" style="left:670.167px;width:100px;text-align:center;top:357px;letter-spacing:0.334px;color:#0000ff;">DR</div>
<div class="t" style="left:738px;top:357px;letter-spacing:-0.029px;">CASH DEPOSIT</div>
<div class="a" style="left:28px;top:373px;width:917px;height:15px;background:#fff"></div>
<div class="a" style="left:60px;top:373px;width:1px;height:15px;background:#b8c9c8"></div>
<div class="a" style="left:92px;top:373px;width:1px;height:15px;background:#b8c9c8"></div>
<div class="a" style="left:108px;top:373px;width:1px;height:15px;background:#b8c9c8"></div>
<div class="a" style="left:159px;top:373px;width:1px;height:15px;background:#b8c9c8"></div>
<div class="a" style="left:223px;top:373px;width:1px;height:15px;background:#b8c9c8"></div>
<div class="a" style="left:247px;top:373px;width:1px;height:15px;background:#b8c9c8"></div>
<div class="a" style="left:324px;top:373px;width:1px;height:15px;background:#b8c9c8"></div>
<div class="a" style="left:348px;top:373px;width:1px;height:15px;background:#b8c9c8"></div>
<div class="a" style="left:401px;top:373px;width:1px;height:15px;background:#b8c9c8"></div>
<div class="a" style="left:430px;top:373px;width:1px;height:15px;background:#b8c9c8"></div>
<div class="a" style="left:489px;top:373px;width:1px;height:15px;background:#b8c9c8"></div>
<div class="a" style="left:594px;top:373px;width:1px;height:15px;background:#b8c9c8"></div>
<div class="a" style="left:703px;top:373px;width:1px;height:15px;background:#b8c9c8"></div>
<div class="a" style="left:737px;top:373px;width:1px;height:15px;background:#b8c9c8"></div>
<div class="t" style="left:-140.674px;width:200px;text-align:right;top:374px;letter-spacing:0.326px;color:#0000ff;">7</div>
<div class="t" style="left:61px;top:374px;letter-spacing:0.326px;">2015</div>
<div class="t" style="left:94px;top:374px;letter-spacing:0.326px;">1</div>
<div class="t" style="left:110px;top:374px;letter-spacing:0.161px;">07/04/15</div>
<div class="t" style="left:23.253px;width:200px;text-align:right;top:374px;letter-spacing:0.253px;">1000.0000</div>
<div class="t" style="left:227px;top:374px;letter-spacing:0.169px;">MR</div>
<div class="t" style="left:249px;top:374px;letter-spacing:0.326px;">807574</div>
<div class="t" style="left:285.998px;width:100px;text-align:center;top:374px;letter-spacing:-0.004px;">GL</div>
<div class="t" style="left:403px;top:374px;letter-spacing:-0.001px;">SGD</div>
<div class="t" style="left:289.232px;width:200px;text-align:right;top:374px;letter-spacing:0.232px;">1.00000</div>
<div class="t" style="left:394.179px;width:200px;text-align:right;top:374px;letter-spacing:0.179px;color:#0000ff;">10,991.91</div>
<div class="t" style="left:503.179px;width:200px;text-align:right;top:374px;letter-spacing:0.179px;color:#0000ff;">10,991.91</div>
<div class="t" style="left:670.167px;width:100px;text-align:center;top:374px;letter-spacing:0.334px;color:#0000ff;">DR</div>
<div class="t" style="left:738px;top:374px;letter-spacing:-0.101px;">CQ DEPOSIT</div>
<div class="a" style="left:28px;top:390px;width:917px;height:15px;background:#fff"></div>
<div class="a" style="left:60px;top:390px;width:1px;height:15px;background:#b8c9c8"></div>
<div class="a" style="left:92px;top:390px;width:1px;height:15px;background:#b8c9c8"></div>
<div class="a" style="left:108px;top:390px;width:1px;height:15px;background:#b8c9c8"></div>
<div class="a" style="left:159px;top:390px;width:1px;height:15px;background:#b8c9c8"></div>
<div class="a" style="left:223px;top:390px;width:1px;height:15px;background:#b8c9c8"></div>
<div class="a" style="left:247px;top:390px;width:1px;height:15px;background:#b8c9c8"></div>
<div class="a" style="left:324px;top:390px;width:1px;height:15px;background:#b8c9c8"></div>
<div class="a" style="left:348px;top:390px;width:1px;height:15px;background:#b8c9c8"></div>
<div class="a" style="left:401px;top:390px;width:1px;height:15px;background:#b8c9c8"></div>
<div class="a" style="left:430px;top:390px;width:1px;height:15px;background:#b8c9c8"></div>
<div class="a" style="left:489px;top:390px;width:1px;height:15px;background:#b8c9c8"></div>
<div class="a" style="left:594px;top:390px;width:1px;height:15px;background:#b8c9c8"></div>
<div class="a" style="left:703px;top:390px;width:1px;height:15px;background:#b8c9c8"></div>
<div class="a" style="left:737px;top:390px;width:1px;height:15px;background:#b8c9c8"></div>
<div class="t" style="left:-140.674px;width:200px;text-align:right;top:391px;letter-spacing:0.326px;color:#ff0000;">8</div>
<div class="t" style="left:61px;top:391px;letter-spacing:0.326px;">2015</div>
<div class="t" style="left:94px;top:391px;letter-spacing:0.326px;">1</div>
<div class="t" style="left:110px;top:391px;letter-spacing:0.161px;">07/04/15</div>
<div class="t" style="left:23.253px;width:200px;text-align:right;top:391px;letter-spacing:0.253px;">1000.0000</div>
<div class="t" style="left:227px;top:391px;letter-spacing:-0.167px;">PT</div>
<div class="t" style="left:249px;top:391px;letter-spacing:0.326px;">1004904</div>
<div class="t" style="left:285.998px;width:100px;text-align:center;top:391px;letter-spacing:-0.004px;">AP</div>
<div class="t" style="left:403px;top:391px;letter-spacing:-0.001px;">SGD</div>
<div class="t" style="left:289.232px;width:200px;text-align:right;top:391px;letter-spacing:0.232px;">1.00000</div>
<div class="t" style="left:394.162px;width:200px;text-align:right;top:391px;letter-spacing:0.162px;color:#ff0000;">(500,000.00)</div>
<div class="t" style="left:503.162px;width:200px;text-align:right;top:391px;letter-spacing:0.162px;color:#ff0000;">(500,000.00)</div>
<div class="t" style="left:670.167px;width:100px;text-align:center;top:391px;letter-spacing:0.334px;color:#ff0000;">CR</div>
<div class="t" style="left:738px;top:391px;letter-spacing:-0.031px;">SURIYA TRADING ENT P L</div>
<div class="a" style="left:28px;top:407px;width:917px;height:15px;background:#fff"></div>
<div class="a" style="left:60px;top:407px;width:1px;height:15px;background:#b8c9c8"></div>
<div class="a" style="left:92px;top:407px;width:1px;height:15px;background:#b8c9c8"></div>
<div class="a" style="left:108px;top:407px;width:1px;height:15px;background:#b8c9c8"></div>
<div class="a" style="left:159px;top:407px;width:1px;height:15px;background:#b8c9c8"></div>
<div class="a" style="left:223px;top:407px;width:1px;height:15px;background:#b8c9c8"></div>
<div class="a" style="left:247px;top:407px;width:1px;height:15px;background:#b8c9c8"></div>
<div class="a" style="left:324px;top:407px;width:1px;height:15px;background:#b8c9c8"></div>
<div class="a" style="left:348px;top:407px;width:1px;height:15px;background:#b8c9c8"></div>
<div class="a" style="left:401px;top:407px;width:1px;height:15px;background:#b8c9c8"></div>
<div class="a" style="left:430px;top:407px;width:1px;height:15px;background:#b8c9c8"></div>
<div class="a" style="left:489px;top:407px;width:1px;height:15px;background:#b8c9c8"></div>
<div class="a" style="left:594px;top:407px;width:1px;height:15px;background:#b8c9c8"></div>
<div class="a" style="left:703px;top:407px;width:1px;height:15px;background:#b8c9c8"></div>
<div class="a" style="left:737px;top:407px;width:1px;height:15px;background:#b8c9c8"></div>
<div class="t" style="left:-140.674px;width:200px;text-align:right;top:408px;letter-spacing:0.326px;color:#0000ff;">9</div>
<div class="t" style="left:61px;top:408px;letter-spacing:0.326px;">2015</div>
<div class="t" style="left:94px;top:408px;letter-spacing:0.326px;">1</div>
<div class="t" style="left:110px;top:408px;letter-spacing:0.161px;">08/04/15</div>
<div class="t" style="left:23.253px;width:200px;text-align:right;top:408px;letter-spacing:0.253px;">1000.0000</div>
<div class="t" style="left:227px;top:408px;letter-spacing:0.169px;">MR</div>
<div class="t" style="left:249px;top:408px;letter-spacing:0.326px;">807577</div>
<div class="t" style="left:285.998px;width:100px;text-align:center;top:408px;letter-spacing:-0.004px;">GL</div>
<div class="t" style="left:403px;top:408px;letter-spacing:-0.001px;">SGD</div>
<div class="t" style="left:289.232px;width:200px;text-align:right;top:408px;letter-spacing:0.232px;">1.00000</div>
<div class="t" style="left:394.161px;width:200px;text-align:right;top:408px;letter-spacing:0.161px;color:#0000ff;">3,153.38</div>
<div class="t" style="left:503.161px;width:200px;text-align:right;top:408px;letter-spacing:0.161px;color:#0000ff;">3,153.38</div>
<div class="t" style="left:670.167px;width:100px;text-align:center;top:408px;letter-spacing:0.334px;color:#0000ff;">DR</div>
<div class="t" style="left:738px;top:408px;letter-spacing:-0.101px;">CQ DEPOSIT</div>
<div class="a" style="left:28px;top:424px;width:917px;height:15px;background:#fff"></div>
<div class="a" style="left:60px;top:424px;width:1px;height:15px;background:#b8c9c8"></div>
<div class="a" style="left:92px;top:424px;width:1px;height:15px;background:#b8c9c8"></div>
<div class="a" style="left:108px;top:424px;width:1px;height:15px;background:#b8c9c8"></div>
<div class="a" style="left:159px;top:424px;width:1px;height:15px;background:#b8c9c8"></div>
<div class="a" style="left:223px;top:424px;width:1px;height:15px;background:#b8c9c8"></div>
<div class="a" style="left:247px;top:424px;width:1px;height:15px;background:#b8c9c8"></div>
<div class="a" style="left:324px;top:424px;width:1px;height:15px;background:#b8c9c8"></div>
<div class="a" style="left:348px;top:424px;width:1px;height:15px;background:#b8c9c8"></div>
<div class="a" style="left:401px;top:424px;width:1px;height:15px;background:#b8c9c8"></div>
<div class="a" style="left:430px;top:424px;width:1px;height:15px;background:#b8c9c8"></div>
<div class="a" style="left:489px;top:424px;width:1px;height:15px;background:#b8c9c8"></div>
<div class="a" style="left:594px;top:424px;width:1px;height:15px;background:#b8c9c8"></div>
<div class="a" style="left:703px;top:424px;width:1px;height:15px;background:#b8c9c8"></div>
<div class="a" style="left:737px;top:424px;width:1px;height:15px;background:#b8c9c8"></div>
<div class="t" style="left:-140.674px;width:200px;text-align:right;top:425px;letter-spacing:0.326px;color:#0000ff;">10</div>
<div class="t" style="left:61px;top:425px;letter-spacing:0.326px;">2015</div>
<div class="t" style="left:94px;top:425px;letter-spacing:0.326px;">1</div>
<div class="t" style="left:110px;top:425px;letter-spacing:0.161px;">08/04/15</div>
<div class="t" style="left:23.253px;width:200px;text-align:right;top:425px;letter-spacing:0.253px;">1000.0000</div>
<div class="t" style="left:227px;top:425px;letter-spacing:0.169px;">MR</div>
<div class="t" style="left:249px;top:425px;letter-spacing:0.326px;">807578</div>
<div class="t" style="left:285.998px;width:100px;text-align:center;top:425px;letter-spacing:-0.004px;">GL</div>
<div class="t" style="left:403px;top:425px;letter-spacing:-0.001px;">SGD</div>
<div class="t" style="left:289.232px;width:200px;text-align:right;top:425px;letter-spacing:0.232px;">1.00000</div>
<div class="t" style="left:394.161px;width:200px;text-align:right;top:425px;letter-spacing:0.161px;color:#0000ff;">7,000.00</div>
<div class="t" style="left:503.161px;width:200px;text-align:right;top:425px;letter-spacing:0.161px;color:#0000ff;">7,000.00</div>
<div class="t" style="left:670.167px;width:100px;text-align:center;top:425px;letter-spacing:0.334px;color:#0000ff;">DR</div>
<div class="t" style="left:738px;top:425px;letter-spacing:-0.029px;">CASH DEPOSIT</div>
<div class="a" style="left:28px;top:441px;width:917px;height:15px;background:#fff"></div>
<div class="a" style="left:60px;top:441px;width:1px;height:15px;background:#b8c9c8"></div>
<div class="a" style="left:92px;top:441px;width:1px;height:15px;background:#b8c9c8"></div>
<div class="a" style="left:108px;top:441px;width:1px;height:15px;background:#b8c9c8"></div>
<div class="a" style="left:159px;top:441px;width:1px;height:15px;background:#b8c9c8"></div>
<div class="a" style="left:223px;top:441px;width:1px;height:15px;background:#b8c9c8"></div>
<div class="a" style="left:247px;top:441px;width:1px;height:15px;background:#b8c9c8"></div>
<div class="a" style="left:324px;top:441px;width:1px;height:15px;background:#b8c9c8"></div>
<div class="a" style="left:348px;top:441px;width:1px;height:15px;background:#b8c9c8"></div>
<div class="a" style="left:401px;top:441px;width:1px;height:15px;background:#b8c9c8"></div>
<div class="a" style="left:430px;top:441px;width:1px;height:15px;background:#b8c9c8"></div>
<div class="a" style="left:489px;top:441px;width:1px;height:15px;background:#b8c9c8"></div>
<div class="a" style="left:594px;top:441px;width:1px;height:15px;background:#b8c9c8"></div>
<div class="a" style="left:703px;top:441px;width:1px;height:15px;background:#b8c9c8"></div>
<div class="a" style="left:737px;top:441px;width:1px;height:15px;background:#b8c9c8"></div>
<div class="t" style="left:-140.674px;width:200px;text-align:right;top:442px;letter-spacing:0.326px;color:#0000ff;">11</div>
<div class="t" style="left:61px;top:442px;letter-spacing:0.326px;">2015</div>
<div class="t" style="left:94px;top:442px;letter-spacing:0.326px;">1</div>
<div class="t" style="left:110px;top:442px;letter-spacing:0.161px;">08/04/15</div>
<div class="t" style="left:23.253px;width:200px;text-align:right;top:442px;letter-spacing:0.253px;">1000.0000</div>
<div class="t" style="left:227px;top:442px;letter-spacing:0.169px;">MR</div>
<div class="t" style="left:249px;top:442px;letter-spacing:0.326px;">807576</div>
<div class="t" style="left:285.998px;width:100px;text-align:center;top:442px;letter-spacing:-0.004px;">GL</div>
<div class="t" style="left:403px;top:442px;letter-spacing:-0.001px;">SGD</div>
<div class="t" style="left:289.232px;width:200px;text-align:right;top:442px;letter-spacing:0.232px;">1.00000</div>
<div class="t" style="left:394.179px;width:200px;text-align:right;top:442px;letter-spacing:0.179px;color:#0000ff;">20,240.36</div>
<div class="t" style="left:503.179px;width:200px;text-align:right;top:442px;letter-spacing:0.179px;color:#0000ff;">20,240.36</div>
<div class="t" style="left:670.167px;width:100px;text-align:center;top:442px;letter-spacing:0.334px;color:#0000ff;">DR</div>
<div class="t" style="left:738px;top:442px;letter-spacing:-0.101px;">CQ DEPOSIT</div>
<div class="a" style="left:27px;top:462px;width:918px;height:1px;background:#000"></div>
<div class="t" style="left:463px;top:469px;letter-spacing:0.064px;">Total</div>
<div class="t" style="left:505.194px;width:200px;text-align:right;top:469px;letter-spacing:0.194px;color:#0000ff;">151,259.16</div>
<div class="t" style="left:713px;top:469px;letter-spacing:0.334px;color:#0000ff;">DR</div>
<div class="t" style="left:53px;top:489px;color:#0000ff;font-style:italic;letter-spacing:0.17px">Double Click to Zoom the Respective Entries</div>
<div class="t" style="left:312px;top:489px;color:#ff0000;font-style:italic;letter-spacing:0.11px">Right Click to Zoom the Invoice Entry</div>
<div class="t" style="left:528px;top:489px;color:#0000ff;font-style:italic;letter-spacing:0.06px">Press F7 Key To Zoom the arapgls Log File</div>
<div class="a" style="left:945px;top:247px;width:1px;height:259px;background:#fff"></div>
<div class="a" style="left:946px;top:247px;width:17px;height:276px;background:#f0f0f0"></div>
<div class="a" style="left:946px;top:264px;width:15px;height:18px;background:#cdcdcd"></div>
<svg class="a" style="left:949px;top:252px;overflow:visible" width="10" height="8" viewBox="0 0 10 8"><path d="M1.6 6.4 L5 3 L8.4 6.4" fill="none" stroke="#484848" stroke-width="2.6"/></svg>
<svg class="a" style="left:949px;top:493px;overflow:visible" width="10" height="8" viewBox="0 0 10 8"><path d="M1.6 2.6 L5 6 L8.4 2.6" fill="none" stroke="#484848" stroke-width="2.6"/></svg>
<div class="a" style="left:27px;top:506px;width:919px;height:1px;background:#fff"></div>
<div class="a" style="left:27px;top:507px;width:919px;height:16px;background:#f0f0f0"></div>
<div class="a" style="left:44px;top:507px;width:843px;height:15px;background:#cdcdcd"></div>
<svg class="a" style="left:31px;top:510px;overflow:visible" width="8" height="9" viewBox="0 0 8 9"><path d="M6.4 1.1 L3 4.5 L6.4 7.9" fill="none" stroke="#484848" stroke-width="2.6"/></svg>
<svg class="a" style="left:932px;top:510px;overflow:visible" width="8" height="9" viewBox="0 0 8 9"><path d="M2.6 1.1 L6 4.5 L2.6 7.9" fill="none" stroke="#484848" stroke-width="2.6"/></svg>
<div class="a" style="left:963px;top:247px;width:1px;height:277px;background:#fff"></div>
<div class="a" style="left:23px;top:246px;width:1px;height:281px;background:#fff"></div>
<div class="a" style="left:304px;top:538px;width:397px;height:36px;box-sizing:border-box;border:1px solid #d8e2e2"></div>
<div class="a" style="left:308px;top:543px;width:76px;height:26px;box-sizing:border-box;border:1px solid #3399ff;background:#b8c9c8;box-shadow:inset 0 0 0 2px #f4f4f4"></div>
<div class="a" style="left:311px;top:546px;width:70px;height:20px;box-sizing:border-box;border:1px dotted #000"></div>
<div class="t s" style="left:308px;width:76px;text-align:center;top:548px;line-height:17px">F5 - <u>F</u>etch</div>
<div class="a" style="left:387px;top:543px;width:75px;height:26px;box-sizing:border-box;border:1px solid #b0b8b8;background:#b8c9c8;box-shadow:inset 0 0 0 2px #f2f2f2"></div>
<div class="t s" style="left:387px;width:75px;text-align:center;top:548px;line-height:17px">F4 - <u>R</u>efresh</div>
<div class="a" style="left:464px;top:543px;width:76px;height:26px;box-sizing:border-box;border:1px solid #b0b8b8;background:#b8c9c8;box-shadow:inset 0 0 0 2px #f2f2f2"></div>
<div class="t s" style="left:464px;width:76px;text-align:center;top:548px;line-height:17px">F3 - Fi<u>l</u>ter</div>
<div class="a" style="left:542px;top:543px;width:76px;height:26px;box-sizing:border-box;border:1px solid #b0b8b8;background:#b8c9c8;box-shadow:inset 0 0 0 2px #f2f2f2"></div>
<div class="t s" style="left:542px;width:76px;text-align:center;top:548px;line-height:17px">Esc - <u>E</u>nd</div>
<div class="a" style="left:621px;top:543px;width:76px;height:26px;box-sizing:border-box;border:1px solid #b8b8b8;background:linear-gradient(#f2f2f2,#e6e6e6)"></div>
<div class="t s" style="left:621px;width:76px;text-align:center;top:548px;line-height:17px">F6 - Cancel</div>
</body></html>
